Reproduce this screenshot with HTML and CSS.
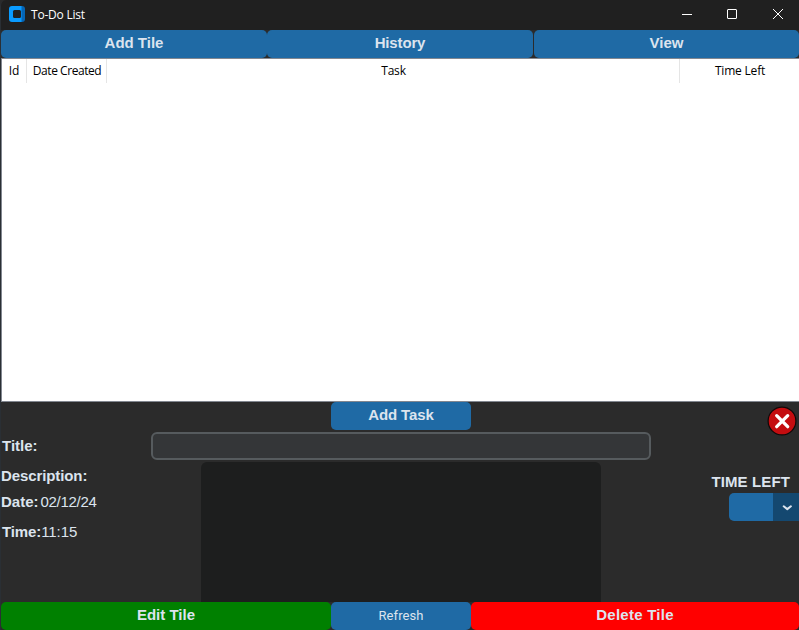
FILE: index.html
```html
<!DOCTYPE html>
<html lang="en">
<head>
<meta charset="utf-8">
<title>To-Do List</title>
<link rel="stylesheet" href="styles.css">
</head>
<body>
<div class="window">
  <header class="titlebar">
    <svg class="logo" width="16" height="16" viewBox="0 0 16 16">
      <path fill="#0a9bff" d="M3 0h10v16H3a3 3 0 0 1-3-3V3a3 3 0 0 1 3-3z"/>
      <path fill="#0565b5" d="M12.5 0h.5a3 3 0 0 1 3 3v10a3 3 0 0 1-3 3h-.5z"/>
      <rect x="4" y="4" width="8" height="8" rx="1.5" fill="#202020"/>
    </svg>
    <span class="caption">To-Do List</span>
    <svg class="controls" width="104" height="12" viewBox="0 0 104 12" fill="none" stroke="#fff">
      <path d="M0 6.5h10"/>
      <rect x="45.5" y="1.5" width="9" height="9" rx=".5"/>
      <path d="M91 1l10 10M101 1L91 11"/>
    </svg>
  </header>
  <nav class="toolbar">
    <button class="btn"><span>Add Tile</span></button>
    <button class="btn history"><span>History</span></button>
    <button class="btn last"><span>View</span></button>
  </nav>
  <main class="table">
    <div class="thead">
      <span class="th id"><span>Id</span></span>
      <span class="th date"><span>Date Created</span></span>
      <span class="th task"><span>Task</span></span>
      <span class="th left"><span>Time Left</span></span>
    </div>
  </main>
  <section class="form">
    <div class="labels">
      <div class="row title"><b>Title:</b></div>
      <div class="row desc"><b>Description:</b></div>
      <div class="row day"><b>Date:</b><span>02/12/24</span></div>
      <div class="row time"><b>Time:</b><span>11:15</span></div>
    </div>
    <div class="fields">
      <button class="btn add"><span>Add Task</span></button>
      <div class="entry"></div>
      <div class="textbox"></div>
    </div>
    <div class="side">
      <svg class="close" width="30" height="30" viewBox="0 0 30 30">
        <circle cx="15" cy="15" r="13.9" fill="#c40d10" stroke="#100808" stroke-width="1.2"/>
        <path d="M9.7 9.7l11 11M20.7 9.7l-11 11" stroke="#fff" stroke-width="3.3" stroke-linecap="round"/>
      </svg>
      <b class="left-label">TIME LEFT</b>
      <div class="select">
        <svg width="26" height="28" viewBox="0 0 26 28"><path d="M10.7 13.3l3.6 2.8 3.6-2.8" fill="none" stroke="#dce4ee" stroke-width="2" stroke-linecap="round" stroke-linejoin="round"/></svg>
      </div>
    </div>
  </section>
  <footer class="actions">
    <button class="btn edit"><span>Edit Tile</span></button>
    <button class="btn refresh"><span>Refresh</span></button>
    <button class="btn delete"><span>Delete Tile</span></button>
  </footer>
</div>
</body>
</html>
```
FILE: styles.css
```css
* { box-sizing: border-box; }
body { margin: 0; background: #2b2b2b; }
.window {
  width: 799px; height: 630px; overflow: hidden;
  display: flex; flex-direction: column;
  border-left: 1px solid #2a2f34;
  border-top-left-radius: 6px;
  background: #2b2b2b; color: #dce4ee;
  font: 15px/18px "Liberation Sans", Arial, sans-serif;
}
.titlebar {
  height: 30px; flex: none; display: flex; align-items: center;
  padding: 0 13px 2px 8px; background: #202020;
}
.caption {
  margin-left: 6px; color: #fff; letter-spacing: -0.22px;
  font: 12px/16px "Open Sans", "Noto Sans", sans-serif;
  padding-top: 1px;
}
.controls { margin-left: auto; }
.toolbar { height: 28px; flex: none; display: flex; }
.btn {
  height: 28px; padding: 0 0 2px; border: 0; border-radius: 5px;
  background: #1f6aa5; color: #dce4ee; letter-spacing: 0;
  font: bold 15px/18px "Liberation Sans", Arial, sans-serif;
}
.toolbar .btn { width: 266px; flex: none; }
.toolbar .history { letter-spacing: -0.15px; }
.toolbar .last { margin-left: 1px; width: 265px; }
.table {
  height: 344px; flex: none; background: #fff;
  border: 1px solid #828790; border-right: 0;
}
.thead {
  height: 24px; display: flex; color: #000; letter-spacing: -0.2px;
  font: 12px/24px "Open Sans", "Noto Sans", sans-serif;
}
.th { text-align: center; border-right: 1px solid #e5e5e5; }
.id { width: 25px; }
.date { width: 80px; padding-left: 1px; letter-spacing: -0.45px; }
.task { width: 573px; padding-left: 1px; }
.left { flex: 1; border: 0; padding-left: 1px; }
.form { height: 200px; flex: none; display: flex; }
.labels { width: 150px; padding-top: 35px; }
.row { display: flex; height: 18px; }
.title { padding-left: 1px; margin-bottom: 12px; }
.desc { margin-bottom: 8px; letter-spacing: -0.1px; }
.day { margin-bottom: 12px; gap: 2px; letter-spacing: -0.3px; }
.day b { letter-spacing: 0; }
.time { padding-left: 1px; letter-spacing: -0.1px; }
.fields { width: 500px; display: flex; flex-direction: column; align-items: center; }
.add { width: 140px; margin-bottom: 2px; letter-spacing: -0.1px; }
.entry {
  width: 500px; height: 28px; margin-bottom: 2px;
  border: 2px solid #565b5e; border-radius: 6px; background: #343638;
}
.textbox { width: 400px; height: 140px; border-radius: 6px 6px 0 0; background: #1d1e1e; }
.side { flex: 1; display: flex; flex-direction: column; align-items: flex-end; padding-top: 4px; }
.close { margin-right: 2.5px; flex: none; }
.left-label { margin: 37px 9px 2px 0; white-space: nowrap; letter-spacing: 0.12px; }
.select {
  width: 70px; height: 28px; display: flex; justify-content: flex-end;
  border-radius: 5px 0 0 5px; background: #1f6aa5; overflow: hidden;
}
.select svg { background: #144870; }
.actions { height: 28px; flex: none; display: flex; }
.edit { width: 330px; background: #008000; }
.refresh {
  width: 140px; padding: 0; letter-spacing: 0.1px;
  font: 13px/18px Roboto, sans-serif;
}
.delete { width: 328px; background: #f00; letter-spacing: 0.25px; }
```
